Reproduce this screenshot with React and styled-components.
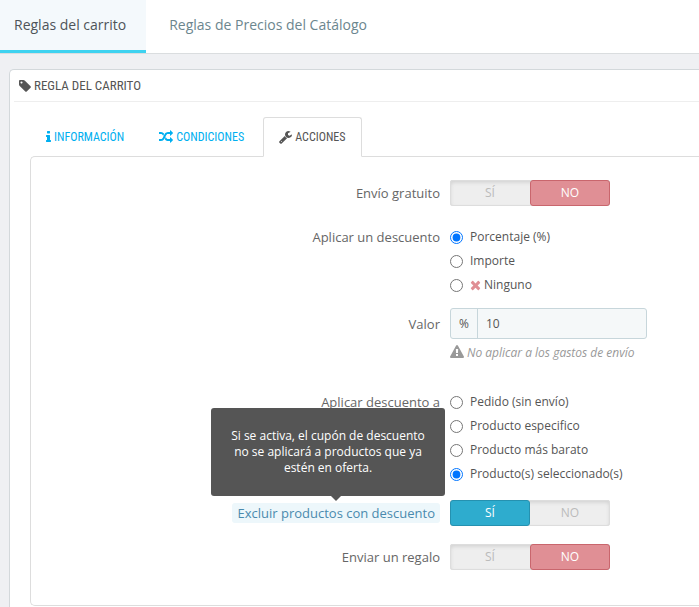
import { useState } from 'react';
import styled, { createGlobalStyle, css } from 'styled-components';

const ICONS = {
  tag: 'M448 448q0-53-37.5-90.5t-90.5-37.5-90.5 37.5-37.5 90.5 37.5 90.5 90.5 37.5 90.5-37.5 37.5-90.5zm1067 576q0 53-37 90l-491 492q-39 37-91 37-53 0-90-37l-715-716q-38-37-64.5-101t-26.5-117v-416q0-52 38-90t90-38h416q53 0 117 26.5t102 64.5l715 714q37 39 37 91z',
  info: 'M640 1344v128q0 26-19 45t-45 19h-512q-26 0-45-19t-19-45v-128q0-26 19-45t45-19h64v-384h-64q-26 0-45-19t-19-45v-128q0-26 19-45t45-19h384q26 0 45 19t19 45v576h64q26 0 45 19t19 45zm-128-1152v192q0 26-19 45t-45 19h-256q-26 0-45-19t-19-45v-192q0-26 19-45t45-19h256q26 0 45 19t19 45z',
  random:
    'M666 481q-60 92-137 273-22-45-37-72.5t-40.5-63.5-51-56.5-63-35-81.5-14.5h-224q-14 0-23-9t-9-23v-192q0-14 9-23t23-9h224q250 0 410 225zm1126 799q0 14-9 23l-320 320q-9 9-23 9-13 0-22.5-9.5t-9.5-22.5v-192q-32 0-85 .5t-81 1-73-1-71-5-64-10.5-63-18.5-58-28.5-59-40-55-53.5-56-69.5q59-93 136-273 22 45 37 72.5t40.5 63.5 51 56.5 63 35 81.5 14.5h256v-192q0-14 9-23t23-9q12 0 24 10l319 319q9 9 9 23zm0-896q0 14-9 23l-320 320q-9 9-23 9-13 0-22.5-9.5t-9.5-22.5v-192h-256q-48 0-87 15t-69 45-51 61.5-45 77.5q-32 62-78 171-29 66-49.5 111t-54 105-64 100-74 83-90 68.5-106.5 42-128 16.5h-224q-14 0-23-9t-9-23v-192q0-14 9-23t23-9h224q48 0 87-15t69-45 51-61.5 45-77.5q32-62 78-171 29-66 49.5-111t54-105 64-100 74-83 90-68.5 106.5-42 128-16.5h256v-192q0-14 9-23t23-9q12 0 24 10l319 319q9 9 9 23z',
  wrench:
    'M384 1472q0-26-19-45t-45-19-45 19-19 45 19 45 45 19 45-19 19-45zm644-420l-682 682q-37 37-90 37-52 0-91-37l-106-108q-38-36-38-90 0-53 38-91l681-681q39 98 114.5 173.5t173.5 114.5zm634-435q0 39-23 106-47 134-164.5 217.5t-258.5 83.500q-185 0-316.500-131.500t-131.500-316.500 131.500-316.500 316.500-131.500q58 0 121.500 16.500t107.500 46.500q16 11 16 28t-16 28l-293 169v224l193 107q5-3 79-48.500t135.500-81 70.500-35.500q15 0 23.500 10t8.500 25z',
  times:
    'M1298 1322q0 40-28 68l-136 136q-28 28-68 28t-68-28l-294-294-294 294q-28 28-68 28t-68-28l-136-136q-28-28-28-68t28-68l294-294-294-294q-28-28-28-68t28-68l136-136q28-28 68-28t68 28l294 294 294-294q28-28 68-28t68 28l136 136q28 28 28 68t-28 68l-294 294 294 294q28 28 28 68z',
  warning:
    'M1024 1375v-190q0-14-9.5-23.5t-22.5-9.5h-192q-13 0-22.500 9.500t-9.500 23.500v190q0 14 9.500 23.500t22.500 9.500h192q13 0 22.500-9.500t9.500-23.500zm-2-374l18-459q0-12-10-19-13-11-24-11h-220q-11 0-24 11-10 7-10 21l17 457q0 10 10 16.500t24 6.500h185q14 0 23.500-6.500t10.500-16.500zm-14-934l768 1408q35 63-2 126-17 29-46.500 46t-63.500 17h-1536q-34 0-63.500-17t-46.500-46q-37-63-2-126l768-1408q17-31 47-49t65-18 65 18 47 49z',
};

const Icon = ({ name, width = 14 }) => (
  <Glyph width={width} height="14" viewBox={`0 0 ${width * 128} 1792`} aria-hidden="true">
    <path d={ICONS[name]} />
  </Glyph>
);

const tabs = [
  { id: 'info', label: 'INFORMACIÓN', icon: 'info', width: 5 },
  { id: 'conditions', label: 'CONDICIONES', icon: 'random', width: 14 },
  { id: 'actions', label: 'ACCIONES', icon: 'wrench', width: 13 },
];

const discountTypes = [
  { value: 'percent', label: 'Porcentaje (%)' },
  { value: 'amount', label: 'Importe' },
  { value: 'off', label: 'Ninguno', icon: 'times' },
];

const discountTargets = [
  { value: 'order', label: 'Pedido (sin envío)' },
  { value: 'specific', label: 'Producto especifico' },
  { value: 'cheapest', label: 'Producto más barato' },
  { value: 'selection', label: 'Producto(s) seleccionado(s)' },
];

const Switch = ({ name, initial }) => {
  const [on, setOn] = useState(initial);

  return (
    <SwitchTrack role="radiogroup" aria-labelledby={`${name}-label`}>
      <SwitchSide $active={on} $tone="yes">
        <input type="radio" name={name} checked={on} onChange={() => setOn(true)} />
        SÍ
      </SwitchSide>
      <SwitchSide $active={!on} $tone="no">
        <input type="radio" name={name} checked={!on} onChange={() => setOn(false)} />
        NO
      </SwitchSide>
    </SwitchTrack>
  );
};

const RadioList = ({ name, options, initial }) => {
  const [selected, setSelected] = useState(initial);

  return (
    <div role="radiogroup" aria-labelledby={`${name}-label`}>
      {options.map((option) => (
        <RadioRow key={option.value}>
          <input
            type="radio"
            name={name}
            checked={selected === option.value}
            onChange={() => setSelected(option.value)}
          />
          <RadioText>
            {option.icon && <Icon name={option.icon} width={11} />}
            {option.label}
          </RadioText>
        </RadioRow>
      ))}
    </div>
  );
};

const App = () => {
  const [value, setValue] = useState('10');

  return (
    <>
      <GlobalStyle />
      <TopNav>
        <TopLink href="#cart" $active>
          Reglas del carrito
        </TopLink>
        <TopLink href="#catalog">Reglas de Precios del Catálogo</TopLink>
      </TopNav>

      <Panel>
        <PanelHeading>
          <Icon name="tag" width={12} />
          REGLA DEL CARRITO
        </PanelHeading>

        <Tabs>
          {tabs.map((tab) => (
            <Tab key={tab.id} href={`#${tab.id}`} $active={tab.id === 'actions'}>
              <Icon name={tab.icon} width={tab.width} />
              {tab.label}
            </Tab>
          ))}
        </Tabs>

        <Pane>
          <FormGroup $after={19}>
            <GroupLabel as="span" id="shipping-label" $height={26}>
              Envío gratuito
            </GroupLabel>
            <Switch name="shipping" initial={false} />
          </FormGroup>

          <FormGroup $after={11}>
            <GroupLabel as="span" id="discount-label" $height={24}>
              Aplicar un descuento
            </GroupLabel>
            <RadioList name="discount" options={discountTypes} initial="percent" />
          </FormGroup>

          <FormGroup $after={27}>
            <GroupLabel htmlFor="value" $height={32}>
              Valor
            </GroupLabel>
            <div>
              <InputGroup>
                <Addon>%</Addon>
                <Input id="value" value={value} onChange={(e) => setValue(e.target.value)} />
              </InputGroup>
              <Hint>
                <Icon name="warning" />
                No aplicar a los gastos de envío
              </Hint>
            </div>
          </FormGroup>

          <FormGroup $after={14}>
            <GroupLabel as="span" id="target-label" $height={24}>
              Aplicar descuento a
            </GroupLabel>
            <RadioList name="target" options={discountTargets} initial="selection" />
          </FormGroup>

          <FormGroup $after={18}>
            <GroupLabel as="span" $height={26}>
              <TooltipAnchor>
                <span id="exclude-label">Excluir productos con descuento</span>
                <Tooltip role="tooltip">
                  Si se activa, el cupón de descuento
                  <br />
                  no se aplicará a productos que ya
                  <br />
                  estén en oferta.
                </Tooltip>
              </TooltipAnchor>
            </GroupLabel>
            <Switch name="exclude" initial />
          </FormGroup>

          <FormGroup $after={0}>
            <GroupLabel as="span" id="gift-label" $height={26}>
              Enviar un regalo
            </GroupLabel>
            <Switch name="gift" initial={false} />
          </FormGroup>
        </Pane>
      </Panel>
    </>
  );
};

const GlobalStyle = createGlobalStyle`
  * {
    box-sizing: border-box;
  }
  html {
    overflow: hidden;
  }
  body {
    margin: 0;
    background: #eff0f3;
    color: #555;
    font-family: 'Open Sans', 'Noto Sans', sans-serif;
    font-size: 12px;
  }
`;

const condensed = css`
  font-family: 'Roboto Condensed', 'Roboto', sans-serif;
`;

const Glyph = styled.svg`
  flex: none;
  fill: currentColor;
`;

const TopNav = styled.nav`
  display: flex;
  gap: 8px;
  height: 54px;
  background: #fff;
  border-bottom: 1px solid #dadddf;
`;

const TopLink = styled.a`
  display: flex;
  align-items: center;
  padding: 0 20px 2px 14px;
  color: #6c868e;
  font-size: 14px;
  text-decoration: none;
  border-bottom: 3px solid transparent;
  white-space: nowrap;

  & + & {
    padding-left: 15px;
  }

  ${(props) =>
    props.$active &&
    css`
      color: #4e5459;
      background: #f4f9fc;
      border-bottom-color: #3ed2f0;
    `}
`;

/* the panel runs on past the right edge of the window */
const Panel = styled.section`
  margin: 15px 0 0 9px;
  padding: 0 0 20px 4px;
  background: #fff;
  border: 1px solid #d3d8db;
  border-right: 0;
  border-radius: 5px 0 0 0;
`;

const PanelHeading = styled.h1`
  ${condensed}
  display: flex;
  align-items: center;
  gap: 3px;
  height: 32px;
  margin: 0 0 15px;
  padding-left: 5px;
  font-size: 13px;
  font-weight: 400;
  border-bottom: 1px solid #eee;
`;

const Tabs = styled.nav`
  display: flex;
  gap: 3px;
  margin-left: 16px;
`;

const Tab = styled.a`
  ${condensed}
  position: relative;
  display: flex;
  align-items: center;
  gap: 3px;
  height: 40px;
  margin-bottom: -1px;
  padding: 0 15px;
  color: #00aff0;
  font-size: 12px;
  text-decoration: none;
  border: 1px solid transparent;
  border-radius: 3px 3px 0 0;

  ${(props) =>
    props.$active &&
    css`
      color: #555;
      background: #fff;
      border-color: #ddd;
      border-bottom-color: #fff;
    `}
`;

const Pane = styled.div`
  margin-left: 16px;
  padding: 23px 0 35px;
  border: 1px solid #ddd;
  border-right: 0;
  border-radius: 5px 0 0 5px;
`;

const FormGroup = styled.div`
  display: grid;
  grid-template-columns: minmax(0, 409px) minmax(0, 1fr);
  column-gap: 10px;
  margin-bottom: ${(props) => props.$after}px;
`;

const GroupLabel = styled.label`
  display: flex;
  align-items: center;
  justify-content: flex-end;
  height: ${(props) => props.$height}px;
  color: #666;
  font-size: 13px;
  white-space: nowrap;
`;

const TooltipAnchor = styled.span`
  position: relative;
  padding: 0 5px;
  color: #4a8aae;
  line-height: 20px;
  background: #edf7fb;
  border-radius: 3px;
`;

const Tooltip = styled.span`
  position: absolute;
  right: -5px;
  bottom: calc(100% + 7px);
  z-index: 2;
  width: 234px;
  padding: 20px 10px;
  color: #fff;
  font-size: 12px;
  line-height: 16px;
  text-align: center;
  background: #555;
  border-radius: 3px;

  &::after {
    content: '';
    position: absolute;
    top: 100%;
    right: 104px;
    border: 5px solid transparent;
    border-top-color: #555;
    border-bottom: 0;
  }
`;

const SwitchTrack = styled.div`
  display: flex;
  width: 160px;
  height: 26px;
  background: #eee;
  border-radius: 3px;
  box-shadow: inset 0 0 0 1px #ddd, inset 0 2px 4px #ccc;
`;

const tones = {
  yes: { fill: '#2eacce', edge: '#2591b0' },
  no: { fill: '#e08f95', edge: '#c9666d' },
};

const SwitchSide = styled.label`
  display: flex;
  flex: 1;
  align-items: center;
  justify-content: center;
  padding-bottom: 1px;
  color: #bbb;
  border: 1px solid transparent;
  border-radius: 3px;
  cursor: pointer;

  input {
    position: absolute;
    opacity: 0;
    pointer-events: none;
  }

  ${(props) =>
    props.$active &&
    css`
      color: #fff;
      background: ${tones[props.$tone].fill};
      border-color: ${tones[props.$tone].edge};
    `}
`;

const RadioRow = styled.label`
  display: flex;
  align-items: center;
  gap: 7px;
  height: 24px;

  input {
    width: 13px;
    height: 13px;
    margin: 0;
  }
`;

const RadioText = styled.span`
  display: flex;
  align-items: center;
  gap: 3px;
  padding-bottom: 1px;

  svg {
    color: #e08f95;
  }
`;

const InputGroup = styled.div`
  display: flex;
  width: 197px;
  height: 31px;
  background: #f5f8f9;
  border: 1px solid #c7d6db;
  border-radius: 3px;
`;

const Addon = styled.span`
  display: flex;
  align-items: center;
  justify-content: center;
  width: 27px;
  border-right: 1px solid #c7d6db;
`;

const Input = styled.input`
  flex: 1;
  min-width: 0;
  padding: 0 8px;
  color: #555;
  font: inherit;
  background: transparent;
  border: 0;
`;

const Hint = styled.p`
  display: flex;
  align-items: center;
  gap: 3px;
  height: 20px;
  margin: 3px 0 1px;
  color: #999;
  font-style: italic;
`;

export default App;
